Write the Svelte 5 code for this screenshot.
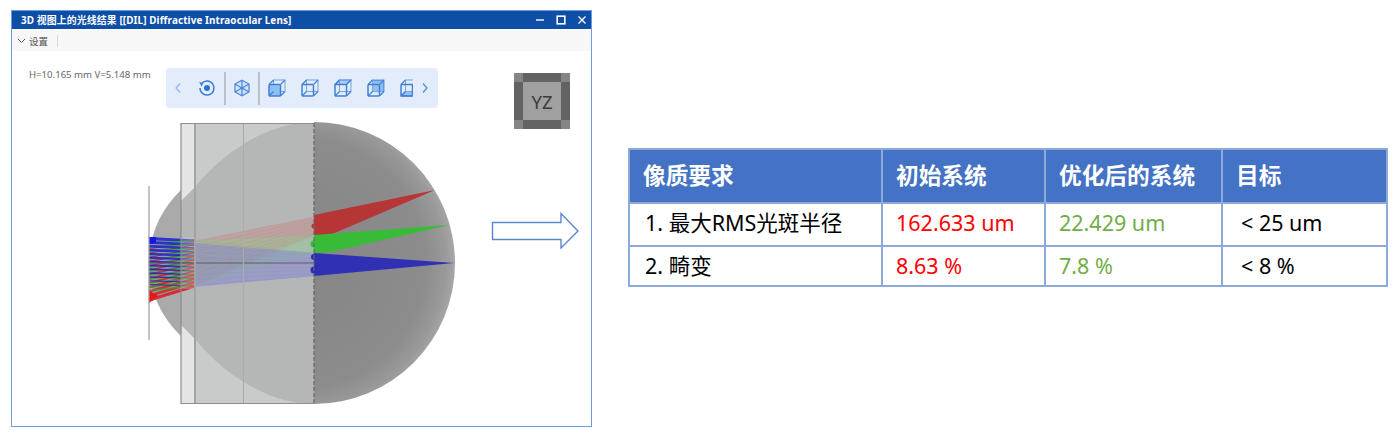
<script>
  const pairs = [];
  const n = 13;
  for (let i = 0; i < n; i++) {
    const t = i / (n - 1);
    pairs.push({ c: '#1a1ad6', w: 0.9 + 2.1 * (1 - t), x1: 149, y1: 238.5 + t * 46, x2: 195, y2: 241 + t * 45 });
    pairs.push({ c: '#1fb51f', w: 1.4, x1: 149, y1: 243 + t * 48, x2: 195, y2: 241 + t * 44 });
    pairs.push({ c: '#e21616', w: 0.8 + 2.2 * t, x1: 149, y1: 249 + t * 51, x2: 195, y2: 241 + t * 45 });
  }
  const fan = [];
  const m = 9;
  for (let i = 0; i < m; i++) {
    const t = i / (m - 1);
    fan.push({ c: '#b97a7a', x1: 195, y1: 241 + t * 44, x2: 314, y2: 217 + t * 18 });
    fan.push({ c: '#86b886', x1: 195, y1: 241 + t * 44, x2: 314, y2: 235 + t * 18 });
    fan.push({ c: '#7f82c4', x1: 195, y1: 241 + t * 44, x2: 314, y2: 253 + t * 23 });
  }
  const cubes = [
    { front: true },
    { wire: true },
    { top: true },
    { back: true },
    { bottom: true, clip: true }
  ];
</script>

<div class="page">
  <section class="window">
    <header class="title">
      <span class="title-text">3D 视图上的光线结果 [[DIL] Diffractive Intraocular Lens]</span>
      <div class="controls">
        <svg width="10" height="10" viewBox="0 0 10 10"><path d="M1 5h8" stroke="#fff" stroke-width="1.4" /></svg>
        <svg width="10" height="10" viewBox="0 0 10 10"><rect x="1.2" y="1.2" width="7.6" height="7.6" fill="none" stroke="#fff" stroke-width="1.6" /></svg>
        <svg width="10" height="10" viewBox="0 0 10 10"><path d="M1.5 1.5l7 7M8.5 1.5l-7 7" stroke="#fff" stroke-width="1.4" /></svg>
      </div>
    </header>
    <div class="settings">
      <svg width="9" height="9" viewBox="0 0 9 9"><path d="M1 3l3.5 3.5L8 3" fill="none" stroke="#555" stroke-width="1" /></svg>
      <span>设置</span>
      <i class="settings-sep"></i>
    </div>
    <div class="stage">
      <div class="overlay">
        <span class="readout">H=10.165 mm V=5.148 mm</span>
        <div class="tools">
          <svg class="chev" width="8" height="12" viewBox="0 0 8 12"><path d="M6 1.500L2 6l4 4.500" fill="none" stroke="#93b6ea" stroke-width="1.2" /></svg>
          <svg class="reset" width="18" height="18" viewBox="0 0 18 18">
            <path d="M3.6 4.6A7 7 0 1 1 2 9" fill="none" stroke="#3f7fd8" stroke-width="1.5" />
            <path d="M1.2 2.8l4.200 1.600-2 3.200z" fill="#3f7fd8" />
            <circle cx="9" cy="9" r="3" fill="#2f6fd6" />
          </svg>
          <i class="sep"></i>
          <svg class="iso" width="18" height="18" viewBox="0 0 18 18" fill="none" stroke="#4a84d8" stroke-width="1.2">
            <path d="M9 1.200l7 3.800v8l-7 3.800-7-3.800V5z" fill="#d5e3f8" />
            <path d="M9 9l7-4M9 9L2 5M9 9v7.800M9 1.200V9M2 13l7-4 7 4" />
          </svg>
          <i class="sep"></i>
          <div class="cubes">
            {#each cubes as c}
              <svg class="cube" width="18" height="18" viewBox="0 0 18 18" fill="none" stroke="#3f7fd8" stroke-width="1.1">
                {#if c.back}<rect x="5.500" y="1.500" width="11" height="11" fill="#8fc0f3" />{/if}
                {#if c.top}<path d="M1 5.500l4.500-4.500h11.500l-4.500 4.500z" fill="#a9cdf5" />{/if}
                {#if c.bottom}<path d="M1 17l4.500-4.500h11.500l-4.500 4.500z" fill="#8fc0f3" />{/if}
                <rect x="5.500" y="1" width="11.500" height="11.500" stroke="#7aa9e6" />
                <rect x="1" y="5.500" width="11.500" height="11.500" rx="1" fill={c.front ? '#8fc0f3' : 'none'} stroke-width="1.5" />
                <path d="M1 5.500l4.500-4.500M12.500 5.500l4.500-4.500M12.500 17l4.500-4.500M1 17l4.500-4.500" />
              </svg>
            {/each}
          </div>
          <svg class="chev" width="8" height="12" viewBox="0 0 8 12"><path d="M2 1.500L6 6l-4 4.500" fill="none" stroke="#4f86d8" stroke-width="1.2" /></svg>
        </div>
        <div class="navcube"><span>YZ</span></div>
      </div>

      <svg class="scene" width="579" height="312" viewBox="12 115 579 312">
        <defs>
          <radialGradient id="eye" gradientUnits="userSpaceOnUse" cx="300" cy="263" r="156">
            <stop offset="0" stop-color="#858585" />
            <stop offset="0.8" stop-color="#8c8c8c" />
            <stop offset="0.93" stop-color="#999" />
            <stop offset="1" stop-color="#a8a8a8" />
          </radialGradient>
          <clipPath id="inRect"><rect x="181" y="123" width="133" height="281" /></clipPath>
        </defs>

        <path d="M314 122A141 141 0 0 1 314 404Z" fill="url(#eye)" />
        <path d="M181 190C162 208 150 232 148.500 263C150 294 162 318 181 336Z" fill="#aaaaaa" />

        <rect x="181" y="123" width="14" height="281" fill="#e3e5e4" />
        <rect x="195" y="123" width="119" height="281" fill="#c9cbca" />
        <g clip-path="url(#inRect)">
          <path d="M314 122C270 122 225 150 195 187L170 212V314L195 339C225 376 270 404 314 404Z" fill="#b5b7b6" />
        </g>

        <polygon points="195,241 314,217 314,235 195,285" fill="#c98585" opacity="0.42" />
        <polygon points="195,241 314,235 314,253 195,285" fill="#8fcf8f" opacity="0.38" />
        <polygon points="195,243 314,253 314,276 195,287" fill="#8184d4" opacity="0.5" />
        <g stroke-width="0.8" opacity="0.22">
          {#each fan as l}
            <line x1={l.x1} y1={l.y1} x2={l.x2} y2={l.y2} stroke={l.c} />
          {/each}
        </g>

        <polygon points="149,237 195,240 195,287 149,302" fill="#8d8fb5" opacity="0.7" />
        <g>
          {#each pairs as l}
            <line x1={l.x1} y1={l.y1} x2={l.x2} y2={l.y2} stroke={l.c} stroke-width={l.w} opacity="0.8" />
          {/each}
        </g>
        <path d="M149 237h7v6l-7 1z" fill="#1515f0" />
        <path d="M149 303v-13l9 6z" fill="#f01414" />
        <rect x="181" y="237" width="14" height="52" fill="#c9cbca" opacity="0.3" />

        <polygon points="314,215 435,190 330,235 314,235" fill="#b63636" />
        <polygon points="314,235 449,225 330,252 314,253" fill="#38bc38" />
        <polygon points="314,253 454,263 314,276" fill="#3030b4" />
        <circle cx="314" cy="226" r="2.500" fill="#b63636" />
        <circle cx="314" cy="244" r="3.500" fill="#38bc38" />
        <circle cx="314" cy="257" r="3" fill="#2c2cb0" />
        <circle cx="314" cy="270" r="3.500" fill="#2c2cb0" />

        <line x1="149" y1="263" x2="314" y2="263" stroke="#5e5e5e" stroke-width="1" />
        <line x1="149" y1="186" x2="149" y2="340" stroke="#9a9a9a" stroke-width="1.2" />
        <line x1="181" y1="123" x2="181" y2="404" stroke="#8a8a8a" stroke-width="1.2" />
        <line x1="195" y1="123" x2="195" y2="404" stroke="#a2a4a3" stroke-width="2" />
        <line x1="243.500" y1="123" x2="243.500" y2="404" stroke="#aaacab" stroke-width="1" />
        <path d="M181 123.500H314M181 403.500H314" stroke="#8e8e8e" stroke-width="1" />
        <line x1="314" y1="123" x2="314" y2="404" stroke="#666" stroke-width="1.2" stroke-dasharray="4 2" />
      </svg>
    </div>
  </section>

  <svg class="arrow" width="89" height="37" viewBox="491 212 89 37">
    <path d="M492.500 222.500H561V213.500L578 231L561 248V239.500H492.500Z" fill="#fff" stroke="#5b86cf" stroke-width="1.4" />
  </svg>

  <table>
    <colgroup>
      <col class="c1" /><col class="c2" /><col class="c3" /><col class="c4" />
    </colgroup>
    <thead>
      <tr><th>像质要求</th><th>初始系统</th><th>优化后的系统</th><th>目标</th></tr>
    </thead>
    <tbody>
      <tr class="r1">
        <td>1. 最大RMS光斑半径</td>
        <td class="red">162.633 um</td>
        <td class="green">22.429 um</td>
        <td class="goal">&lt; 25 um</td>
      </tr>
      <tr class="r2">
        <td>2. 畸变</td>
        <td class="red">8.63 %</td>
        <td class="green">7.8 %</td>
        <td class="goal">&lt; 8 %</td>
      </tr>
    </tbody>
  </table>
</div>

<style>
  :global(body) {
    margin: 0;
    background: #fff;
  }
  .page {
    width: 1397px;
    height: 440px;
    display: flex;
    align-items: flex-start;
    font-family: "Noto Sans", "Noto Sans CJK SC", sans-serif;
    overflow: hidden;
  }
  .window {
    box-sizing: border-box;
    width: 581px;
    height: 417px;
    margin: 10px 0 0 11px;
    border: 1px solid #6f9ade;
    background: #fff;
    display: flex;
    flex-direction: column;
    flex: none;
  }
  .title {
    height: 18px;
    background: #0d4ea6;
    color: #fff;
    display: flex;
    align-items: center;
    justify-content: space-between;
    padding: 0 4px 0 9px;
    flex: none;
  }
  .title-text {
    font-size: 9.9px;
    font-weight: 700;
    letter-spacing: 0.12px;
    white-space: nowrap;
  }
  .controls {
    display: flex;
    gap: 11px;
    align-items: center;
  }
  .settings {
    height: 21px;
    margin-top: 1px;
    background: #f7f7f7;
    display: flex;
    align-items: center;
    padding-left: 5px;
    font-size: 9.5px;
    color: #555;
    flex: none;
  }
  .settings span {
    margin-left: 3px;
  }
  .settings-sep {
    width: 1px;
    height: 12px;
    background: #d8d8d8;
    margin-left: 9px;
  }
  .stage {
    flex: 1;
    min-height: 0;
  }
  .overlay {
    height: 64px;
    box-sizing: border-box;
    display: flex;
    align-items: flex-start;
    padding-left: 17px;
  }
  .readout {
    font-size: 9.6px;
    color: #666;
    width: 137px;
    margin-top: 17px;
    white-space: nowrap;
    flex: none;
  }
  .tools {
    width: 272px;
    height: 40px;
    margin-top: 17px;
    background: #e3ecfb;
    border-radius: 3px;
    display: flex;
    align-items: center;
    flex: none;
  }
  .tools > svg {
    flex: none;
  }
  .chev:first-child {
    margin-left: 8px;
  }
  .reset {
    margin-left: 16px;
  }
  .sep {
    width: 2px;
    height: 33px;
    background: #bcc0c7;
    flex: none;
  }
  .reset + .sep {
    margin-left: 8px;
  }
  .iso {
    margin-left: 7px;
  }
  .iso + .sep {
    margin-left: 7px;
  }
  .cubes {
    display: flex;
    gap: 15px;
    margin-left: 8px;
    width: 145px;
    flex: none;
    overflow: hidden;
  }
  .cube {
    flex: none;
  }
  .chev:last-child {
    margin-left: 8px;
  }
  .navcube {
    box-sizing: border-box;
    width: 56px;
    height: 56px;
    margin: 22px 0 0 76px;
    flex: none;
    background:
      linear-gradient(#858585, #858585) 0 0 / 9px 9px no-repeat,
      linear-gradient(#858585, #858585) 100% 0 / 9px 9px no-repeat,
      linear-gradient(#858585, #858585) 0 100% / 9px 9px no-repeat,
      linear-gradient(#858585, #858585) 100% 100% / 9px 9px no-repeat,
      #636363;
    padding: 9px;
  }
  .navcube span {
    display: flex;
    width: 100%;
    height: 100%;
    align-items: center;
    justify-content: center;
    background: #a0a0a0;
    color: #3a3a3a;
    font-size: 18.5px;
  }
  .scene {
    display: block;
  }
  .arrow {
    flex: none;
    margin: 212px 0 0 -101px;
  }
  table {
    flex: none;
    table-layout: fixed;
    width: 758px;
    border-collapse: collapse;
    margin: 148px 0 0 48px;
    font-size: 21.5px;
    line-height: 1;
    color: #000;
  }
  .c1 { width: 253px; }
  .c2 { width: 163px; }
  .c3 { width: 177px; }
  .c4 { width: 165px; }
  th, td {
    border: 2px solid #8eaadb;
    text-align: left;
    padding: 0 0 0 15px;
    font-weight: 400;
    white-space: nowrap;
  }
  th {
    background: #4472c4;
    color: #fff;
    font-weight: 700;
    height: 51px;
    padding-top: 1px;
    font-size: 22.7px;
    padding-left: 13px;
  }
  .r1 td { height: 38px; padding-bottom: 3px; }
  .r2 td { height: 38px; }
  .red { color: #ff0000; }
  .green { color: #70ad47; }
  td.red, td.green { padding-left: 13px; }
  td.goal { padding-left: 18px; }
</style>
